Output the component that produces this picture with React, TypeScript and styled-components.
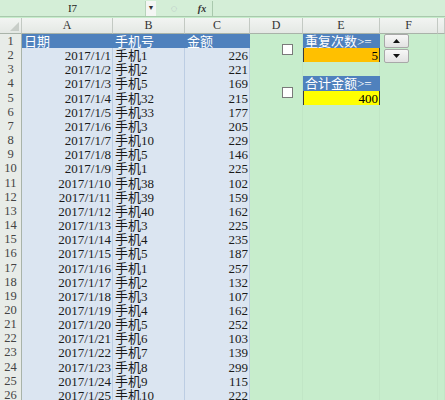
import React from "react";
import styled, { createGlobalStyle } from "styled-components";

const GlobalStyle = createGlobalStyle`
  html, body {
    margin: 0;
    padding: 0;
    background: #c7edcc;
    overflow: hidden;
  }
`;

const FONT = `"Liberation Serif", "Noto Sans CJK SC", serif`;
const COLS = "22px 91px 72px 65px 53px 77px 58px 1fr";
const ROW_H = 14.17;

type Row = [string, string, string];

const rows: Row[] = [
  ["2017/1/1", "手机1", "226"],
  ["2017/1/2", "手机2", "221"],
  ["2017/1/3", "手机5", "169"],
  ["2017/1/4", "手机32", "215"],
  ["2017/1/5", "手机33", "177"],
  ["2017/1/6", "手机3", "205"],
  ["2017/1/7", "手机10", "229"],
  ["2017/1/8", "手机5", "146"],
  ["2017/1/9", "手机1", "225"],
  ["2017/1/10", "手机38", "102"],
  ["2017/1/11", "手机39", "159"],
  ["2017/1/12", "手机40", "162"],
  ["2017/1/13", "手机3", "225"],
  ["2017/1/14", "手机4", "235"],
  ["2017/1/15", "手机5", "187"],
  ["2017/1/16", "手机1", "257"],
  ["2017/1/17", "手机2", "132"],
  ["2017/1/18", "手机3", "107"],
  ["2017/1/19", "手机4", "162"],
  ["2017/1/20", "手机5", "252"],
  ["2017/1/21", "手机6", "103"],
  ["2017/1/22", "手机7", "139"],
  ["2017/1/23", "手机8", "299"],
  ["2017/1/24", "手机9", "115"],
  ["2017/1/25", "手机10", "222"],
];

type Tone = "plain" | "data" | "head" | "orange" | "yellow";

const tones: Record<Tone, { bg: string; fg: string; line: string }> = {
  plain: { bg: "#c7edcc", fg: "#000", line: "#c1e6c6" },
  data: { bg: "#dbe5f1", fg: "#1a1a1a", line: "#bccde3" },
  head: { bg: "#4f81bd", fg: "#ffffff", line: "#4f81bd" },
  orange: { bg: "#ffc000", fg: "#000", line: "#3a3a3a" },
  yellow: { bg: "#ffff00", fg: "#000", line: "#3a3a3a" },
};

const Screen = styled.div`
  position: relative;
  width: 445px;
  height: 400px;
  overflow: hidden;
  font-family: ${FONT};
`;

const FormulaBar = styled.div`
  display: flex;
  align-items: center;
  height: 16px;
  background: #d4eed7;
  border-bottom: 1px solid #a9c9ad;
  margin-bottom: 1px;
`;

const NameBox = styled.div`
  width: 145px;
  height: 15px;
  display: flex;
  align-items: center;
  justify-content: center;
  font-size: 11px;
  color: #222;
  border-right: 1px solid #b8d3bb;
`;

const DropArrow = styled.div`
  width: 10px;
  height: 15px;
  display: flex;
  align-items: center;
  justify-content: center;
  background: #f4f6f4;
  font-size: 7px;
  color: #333;
`;

const Dim = styled.div`
  width: 36px;
  display: flex;
  align-items: center;
  justify-content: center;
  color: #aab;
  font-size: 11px;
`;

const Fx = styled.div`
  width: 20px;
  font-style: italic;
  font-weight: bold;
  font-size: 10px;
  color: #333;
  text-align: center;
`;

const FormulaInput = styled.div`
  flex: 1;
  height: 15px;
  background: #d4eed7;
  border-left: 1px solid #a9c9ad;
`;

const Grid = styled.div`
  display: flex;
  flex-direction: column;
`;

const HeadRow = styled.div`
  display: grid;
  grid-template-columns: ${COLS};
  height: 16px;
`;

const ColHead = styled.div`
  display: flex;
  align-items: center;
  justify-content: center;
  font-size: 12px;
  color: #333;
  background: linear-gradient(#f2f4f2, #e4e8e4);
  border-right: 1px solid #c3c9c3;
  border-bottom: 1px solid #a9b3a9;
  box-sizing: border-box;
`;

const Corner = styled(ColHead)`
  position: relative;
  &::after {
    content: "";
    position: absolute;
    right: 2px;
    bottom: 2px;
    border-left: 9px solid transparent;
    border-bottom: 9px solid #c8cdc8;
  }
`;

const SheetRow = styled.div`
  display: grid;
  grid-template-columns: ${COLS};
  height: ${ROW_H}px;
`;

const RowHead = styled.div`
  display: flex;
  align-items: center;
  justify-content: center;
  font-size: 12.5px;
  color: #444;
  background: #e8ece8;
  border-right: 1px solid #a9b3a9;
  border-bottom: 1px solid #c9cfc9;
  box-sizing: border-box;
`;

const Cell = styled.div<{ $tone: Tone; $right?: boolean }>`
  display: flex;
  align-items: center;
  justify-content: ${(p) => (p.$right ? "flex-end" : "flex-start")};
  padding: 0 1px 0 2px;
  overflow: hidden;
  white-space: nowrap;
  font-size: 13px;
  line-height: 1;
  background: ${(p) => tones[p.$tone].bg};
  color: ${(p) => tones[p.$tone].fg};
  border-right: 1px solid ${(p) => tones[p.$tone].line};
  border-bottom: 1px solid ${(p) => tones[p.$tone].line};
  box-sizing: border-box;
`;

const Boxed = styled(Cell)`
  border: 1px solid #3a3a3a;
  border-top: none;
`;

const CheckBox = styled.div<{ $top: number }>`
  position: absolute;
  left: 282px;
  top: ${(p) => p.$top}px;
  width: 11px;
  height: 11px;
  box-sizing: border-box;
  background: #fff;
  border: 1px solid #7a7a7a;
`;

const Spin = styled.div`
  position: absolute;
  left: 384px;
  top: 34px;
  width: 25px;
  display: flex;
  flex-direction: column;
  gap: 1px;
`;

const SpinButton = styled.div`
  height: 14px;
  display: flex;
  align-items: center;
  justify-content: center;
  background: linear-gradient(#f7f7f7, #e2e2e2);
  border: 1px solid #a8a8a8;
  border-radius: 2px;
  box-sizing: border-box;
`;

const Tri = ({ up }: { up?: boolean }) => (
  <svg width="7" height="4" viewBox="0 0 7 4">
    <path d={up ? "M0 4 L3.5 0 L7 4 Z" : "M0 0 L3.5 4 L7 0 Z"} fill="#111" />
  </svg>
);

const letters = ["A", "B", "C", "D", "E", "F", ""];

function sideCell(rowNo: number, col: "D" | "E" | "F" | "G") {
  if (col === "E") {
    if (rowNo === 1) return <Cell $tone="head">重复次数&gt;=</Cell>;
    if (rowNo === 2)
      return (
        <Boxed $tone="orange" $right>
          5
        </Boxed>
      );
    if (rowNo === 4) return <Cell $tone="head">合计金额&gt;=</Cell>;
    if (rowNo === 5)
      return (
        <Boxed $tone="yellow" $right>
          400
        </Boxed>
      );
  }
  return <Cell $tone="plain" />;
}

export default function App() {
  return (
    <Screen>
      <GlobalStyle />
      <FormulaBar>
        <NameBox>I7</NameBox>
        <DropArrow>▼</DropArrow>
        <Dim>◌</Dim>
        <Fx>fx</Fx>
        <FormulaInput />
      </FormulaBar>

      <Grid>
        <HeadRow>
          <Corner />
          {letters.map((l, i) => (
            <ColHead key={i}>{l}</ColHead>
          ))}
        </HeadRow>

        <SheetRow>
          <RowHead>1</RowHead>
          <Cell $tone="head">日期</Cell>
          <Cell $tone="head">手机号</Cell>
          <Cell $tone="head">金额</Cell>
          {sideCell(1, "D")}
          {sideCell(1, "E")}
          {sideCell(1, "F")}
          {sideCell(1, "G")}
        </SheetRow>

        {rows.map((r, i) => {
          const n = i + 2;
          return (
            <SheetRow key={n}>
              <RowHead>{n}</RowHead>
              <Cell $tone="data" $right>
                {r[0]}
              </Cell>
              <Cell $tone="data">{r[1]}</Cell>
              <Cell $tone="data" $right>
                {r[2]}
              </Cell>
              {sideCell(n, "D")}
              {sideCell(n, "E")}
              {sideCell(n, "F")}
              {sideCell(n, "G")}
            </SheetRow>
          );
        })}
      </Grid>

      <CheckBox $top={44} />
      <CheckBox $top={87} />
      <Spin>
        <SpinButton>
          <Tri up />
        </SpinButton>
        <SpinButton>
          <Tri />
        </SpinButton>
      </Spin>
    </Screen>
  );
}
